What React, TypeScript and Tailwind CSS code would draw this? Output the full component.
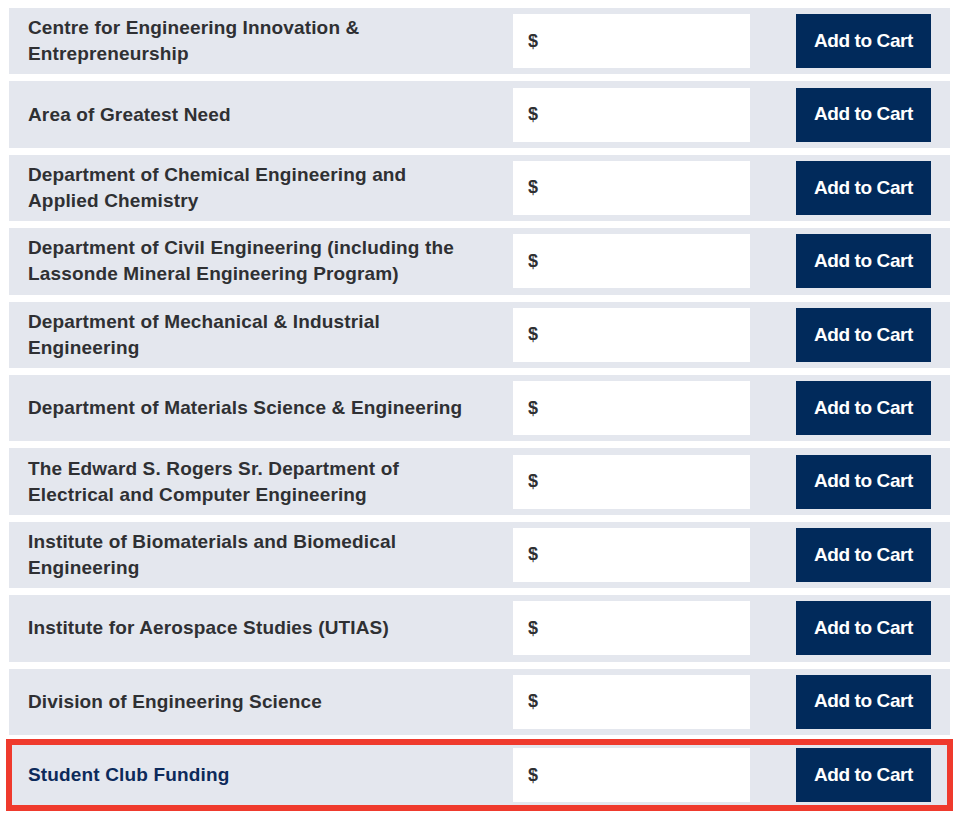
const funds = [
  "Centre for Engineering Innovation & Entrepreneurship",
  "Area of Greatest Need",
  "Department of Chemical Engineering and Applied Chemistry",
  "Department of Civil Engineering (including the Lassonde Mineral Engineering Program)",
  "Department of Mechanical & Industrial Engineering",
  "Department of Materials Science & Engineering",
  "The Edward S. Rogers Sr. Department of Electrical and Computer Engineering",
  "Institute of Biomaterials and Biomedical Engineering",
  "Institute for Aerospace Studies (UTIAS)",
  "Division of Engineering Science",
  "Student Club Funding",
];

function FundRow({ name, highlight }: { name: string; highlight?: boolean }) {
  return (
    <div
      className={
        "flex items-center h-[66.4px] bg-[#e4e7ee] pl-[19px] pr-[19px] " +
        (highlight ? "outline-[6px] outline-solid outline-[#ef3a2d] outline-offset-[-3px]" : "")
      }
    >
      <div
        className={
          "w-[446px] text-[19px] leading-[26px] tracking-[0.15px] font-bold " +
          (highlight ? "text-[#0c2a5b]" : "text-[#2f3033]")
        }
      >
        {name}
      </div>
      <label className="ml-[39px] w-[237px] h-[54px] bg-white flex items-center pl-[15px] text-[18px] font-bold text-[#2f3033]">
        <span>$</span>
        <input type="text" className="flex-1 min-w-0 h-full bg-transparent outline-none pl-1" />
      </label>
      <button className="ml-[46px] w-[135px] h-[54px] bg-[#012a5b] text-white text-[19px] tracking-[-0.4px] font-bold">
        Add to Cart
      </button>
    </div>
  );
}

export default function App() {
  return (
    <div className="min-h-screen bg-white pt-[8px] pl-[9px] font-['Liberation_Sans',Arial,sans-serif]">
      <div className="w-[941px] flex flex-col gap-[7px]">
        {funds.map((f, i) => (
          <FundRow key={f} name={f} highlight={i === funds.length - 1} />
        ))}
      </div>
    </div>
  );
}
